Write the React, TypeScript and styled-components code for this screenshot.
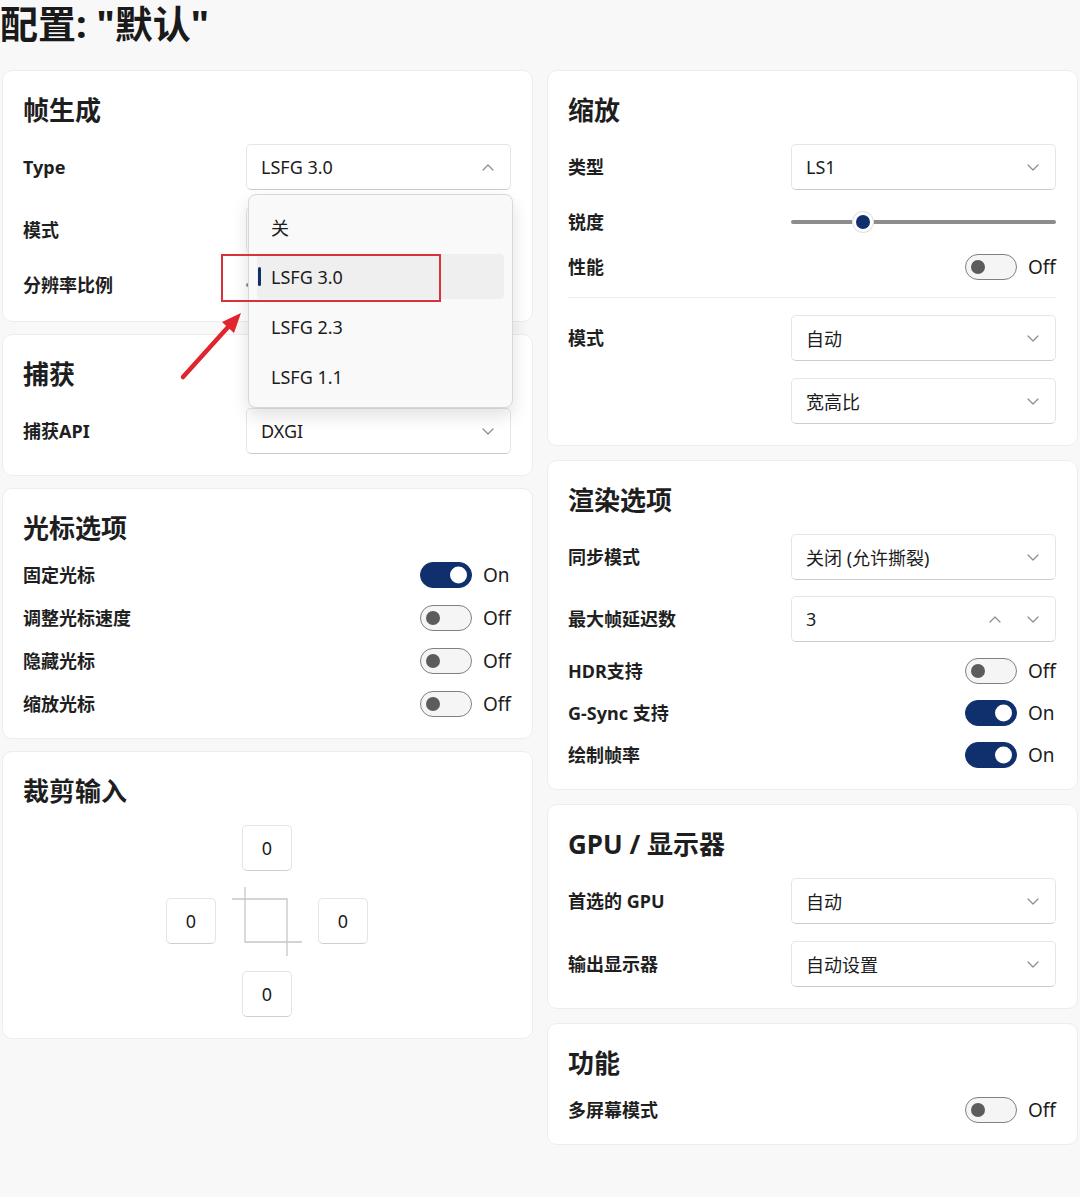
import React from 'react';
import styled, { createGlobalStyle } from 'styled-components';

const GlobalStyle = createGlobalStyle`
  body {
    margin: 0;
    background: #f8f8f8;
    font-family: "Noto Sans", "Noto Sans CJK SC", sans-serif;
    color: #1c1c1c;
  }
`;

const NAVY = '#0f2f6d';

const Page = styled.div`
  width: 1080px;
  height: 1197px;
  overflow: hidden;
`;

const Title = styled.h1`
  margin: 0 0 24px;
  font-size: 38px;
  line-height: 46px;
  font-weight: 700;
  color: #1a1a1a;
`;

const Columns = styled.div`
  display: grid;
  grid-template-columns: 531px 531px;
  column-gap: 14px;
  padding-left: 2px;
  align-items: start;
`;

const Column = styled.div<{ $gap: number }>`
  display: flex;
  flex-direction: column;
  gap: ${p => p.$gap}px;
`;

const Card = styled.section`
  background: #fff;
  border: 1px solid #ededed;
  border-radius: 10px;
  padding: 21px 21px 21px 20px;
`;

const CardTitle = styled.h2`
  margin: 0 0 16px;
  font-size: 26px;
  line-height: 36px;
  font-weight: 700;
  color: #1e1e1e;
`;

const Body = styled.div<{ $gap?: number }>`
  display: flex;
  flex-direction: column;
  gap: ${p => p.$gap ?? 17}px;
`;

const Row = styled.div`
  display: grid;
  grid-template-columns: 1fr 265px;
  align-items: center;
`;

const Label = styled.span`
  font-size: 18px;
  line-height: 26px;
  font-weight: 700;
  color: #1f1f1f;
`;

const SelectBox = styled.div`
  position: relative;
  height: 46px;
  box-sizing: border-box;
  display: flex;
  align-items: center;
  justify-content: space-between;
  padding: 0 16px 0 14px;
  background: #fff;
  border: 1px solid #e6e6e6;
  border-bottom-color: #cdcdcd;
  border-radius: 5px;
  font-size: 18px;
  color: #1c1c1c;
`;

const Arrows = styled.span`
  display: flex;
  gap: 26px;
  align-items: center;
`;

const Chevron: React.FC<{ up?: boolean }> = ({ up }) => (
  <svg width="12" height="7" viewBox="0 0 12 7" fill="none">
    <path
      d={up ? 'M1 6l5-5 5 5' : 'M1 1l5 5 5-5'}
      stroke="#8c8c8c"
      strokeWidth="1.2"
      strokeLinecap="round"
      strokeLinejoin="round"
    />
  </svg>
);

const Menu = styled.div`
  position: absolute;
  top: calc(100% + 5px);
  left: 1px;
  width: 265px;
  box-sizing: border-box;
  z-index: 20;
  padding: 9px 8px 8px;
  display: flex;
  flex-direction: column;
  gap: 5px;
  background: #f9f9f9;
  border: 1px solid #d8d8d8;
  border-radius: 8px;
  box-shadow: 0 8px 18px rgba(0, 0, 0, 0.12);
`;

const MenuItem = styled.div<{ $active?: boolean }>`
  position: relative;
  height: 45px;
  display: flex;
  align-items: center;
  padding-left: 14px;
  border-radius: 4px;
  font-size: 18px;
  background: ${p => (p.$active ? '#efefef' : 'transparent')};

  &::before {
    content: '';
    display: ${p => (p.$active ? 'block' : 'none')};
    position: absolute;
    left: 1px;
    top: 13px;
    width: 3px;
    height: 19px;
    border-radius: 2px;
    background: ${NAVY};
  }
`;

const Highlight = styled.div`
  position: absolute;
  left: -26px;
  top: 109px;
  width: 220px;
  height: 48px;
  box-sizing: border-box;
  border: 2px solid #d9303b;
  z-index: 30;
`;

const PointerArrow = styled.svg`
  position: absolute;
  left: -72px;
  top: 163px;
  z-index: 30;
  overflow: visible;
`;

const SwitchWrap = styled.div`
  display: flex;
  align-items: center;
  justify-content: flex-end;
  gap: 11px;
  height: 26px;
`;

const Switch = styled.span<{ $on?: boolean }>`
  position: relative;
  width: 52px;
  height: 26px;
  box-sizing: border-box;
  border-radius: 13px;
  border: 1.5px solid ${p => (p.$on ? NAVY : '#808080')};
  background: ${p => (p.$on ? NAVY : '#f5f5f5')};

  &::after {
    content: '';
    position: absolute;
    top: 50%;
    transform: translateY(-50%);
    width: ${p => (p.$on ? 17 : 14)}px;
    height: ${p => (p.$on ? 17 : 14)}px;
    border-radius: 50%;
    ${p => (p.$on ? 'right: 4px;' : 'left: 5px;')}
    background: ${p => (p.$on ? '#fff' : '#5c5c5c')};
  }
`;

const SwitchText = styled.span`
  width: 28px;
  font-size: 19px;
  color: #1c1c1c;
`;

const Slider = styled.div`
  position: relative;
  height: 30px;
  display: flex;
  align-items: center;
`;

const Track = styled.div`
  width: 100%;
  height: 4px;
  border-radius: 2px;
  background: #8c8c8c;
`;

const Thumb = styled.span<{ $pos: number }>`
  position: absolute;
  top: 50%;
  left: ${p => p.$pos}%;
  width: 20px;
  height: 20px;
  box-sizing: border-box;
  transform: translate(-50%, -50%);
  border-radius: 50%;
  background: ${NAVY};
  border: 3px solid #fff;
  box-shadow: 0 0 0 1px #e2e2e2;
`;

const Divider = styled.div`
  height: 1px;
  background: #ececec;
`;

const CropGrid = styled.div`
  display: grid;
  grid-template-columns: repeat(3, 50px);
  grid-template-rows: repeat(3, 46px);
  grid-template-areas:
    '. top .'
    'left mid right'
    '. bottom .';
  column-gap: 26px;
  row-gap: 27px;
  justify-content: center;
`;

const CropInput = styled.div<{ $area: string }>`
  grid-area: ${p => p.$area};
  display: flex;
  align-items: center;
  justify-content: center;
  background: #fff;
  border: 1px solid #e4e4e4;
  border-bottom-color: #cfcfcf;
  border-radius: 5px;
  font-size: 18px;
`;

const CropIcon = styled.div`
  grid-area: mid;
  display: flex;
  align-items: center;
  justify-content: center;
`;

const Select: React.FC<{ value: string; up?: boolean; children?: React.ReactNode }> = ({
  value,
  up,
  children,
}) => (
  <SelectBox>
    <span>{value}</span>
    <Chevron up={up} />
    {children}
  </SelectBox>
);

const Toggle: React.FC<{ on?: boolean }> = ({ on }) => (
  <SwitchWrap>
    <Switch $on={on} />
    <SwitchText>{on ? 'On' : 'Off'}</SwitchText>
  </SwitchWrap>
);

const ToggleRow: React.FC<{ label: string; on?: boolean }> = ({ label, on }) => (
  <Row>
    <Label>{label}</Label>
    <Toggle on={on} />
  </Row>
);

const SelectRow: React.FC<{ label?: string; value: string }> = ({ label, value }) => (
  <Row>
    <Label>{label}</Label>
    <Select value={value} />
  </Row>
);

export default function App() {
  return (
    <Page>
      <GlobalStyle />
      <Title>配置: "默认"</Title>
      <Columns>
        <Column $gap={12}>
          <Card>
            <CardTitle>帧生成</CardTitle>
            <Body>
              <Row>
                <Label>Type</Label>
                <Select value="LSFG 3.0" up>
                  <Menu>
                    <MenuItem>关</MenuItem>
                    <MenuItem $active>LSFG 3.0</MenuItem>
                    <MenuItem>LSFG 2.3</MenuItem>
                    <MenuItem>LSFG 1.1</MenuItem>
                  </Menu>
                  <Highlight />
                  <PointerArrow width="70" height="74" viewBox="0 0 70 74">
                    <line x1="8" y1="69" x2="54" y2="18" stroke="#e0252e" strokeWidth="4.5" strokeLinecap="round" />
                    <polygon points="66,5 59,25 47,14" fill="#e0252e" />
                  </PointerArrow>
                </Select>
              </Row>
              {/* covered by the open menu */}
              <SelectRow label="模式" value="" />
              <Row>
                <Label>分辨率比例</Label>
                <Slider>
                  <Track />
                  <Thumb $pos={50} />
                </Slider>
              </Row>
            </Body>
          </Card>

          <Card>
            <CardTitle>捕获</CardTitle>
            <Body>
              <SelectRow label="捕获API" value="DXGI" />
            </Body>
          </Card>

          <Card>
            <CardTitle>光标选项</CardTitle>
            <Body>
              <ToggleRow label="固定光标" on />
              <ToggleRow label="调整光标速度" />
              <ToggleRow label="隐藏光标" />
              <ToggleRow label="缩放光标" />
            </Body>
          </Card>

          <Card>
            <CardTitle>裁剪输入</CardTitle>
            <CropGrid>
              <CropInput $area="top">0</CropInput>
              <CropInput $area="left">0</CropInput>
              <CropIcon>
                <svg width="70" height="70" viewBox="0 0 70 70" fill="none" style={{ overflow: 'visible' }}>
                  <path d="M13 1V56H70M0 13H55V70" stroke="#c6c6c6" strokeWidth="1.3" />
                </svg>
              </CropIcon>
              <CropInput $area="right">0</CropInput>
              <CropInput $area="bottom">0</CropInput>
            </CropGrid>
          </Card>
        </Column>

        <Column $gap={14}>
          <Card>
            <CardTitle>缩放</CardTitle>
            <Body>
              <SelectRow label="类型" value="LS1" />
              <Row>
                <Label>锐度</Label>
                <Slider>
                  <Track />
                  <Thumb $pos={27.2} />
                </Slider>
              </Row>
              <ToggleRow label="性能" />
              <Divider />
              <SelectRow label="模式" value="自动" />
              <SelectRow value="宽高比" />
            </Body>
          </Card>

          <Card>
            <CardTitle>渲染选项</CardTitle>
            <Body $gap={16}>
              <SelectRow label="同步模式" value="关闭 (允许撕裂)" />
              <Row>
                <Label>最大帧延迟数</Label>
                <SelectBox>
                  <span>3</span>
                  <Arrows>
                    <Chevron up />
                    <Chevron />
                  </Arrows>
                </SelectBox>
              </Row>
              <ToggleRow label="HDR支持" />
              <ToggleRow label="G-Sync 支持" on />
              <ToggleRow label="绘制帧率" on />
            </Body>
          </Card>

          <Card>
            <CardTitle>GPU / 显示器</CardTitle>
            <Body>
              <SelectRow label="首选的 GPU" value="自动" />
              <SelectRow label="输出显示器" value="自动设置" />
            </Body>
          </Card>

          <Card>
            <CardTitle>功能</CardTitle>
            <Body>
              <ToggleRow label="多屏幕模式" />
            </Body>
          </Card>
        </Column>
      </Columns>
    </Page>
  );
}
